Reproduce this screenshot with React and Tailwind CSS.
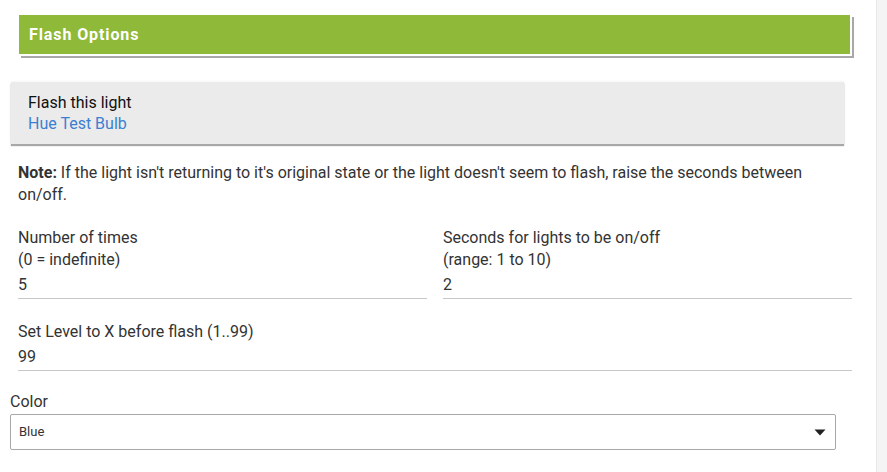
import React from "react";

export default function App() {
  return (
    <div className="flex w-[887px] h-[472px] bg-white overflow-hidden" style={{ fontFamily: "Roboto, 'Liberation Sans', sans-serif" }}>
      <div className="w-[876px] shrink-0 flex flex-col">
        <div className="pt-[15px] pl-[19px] pr-[24px]">
          <div className="h-[41px] bg-[#8fb939] border-r-2 border-b-2 border-white shadow-[2px_2px_0_#a8a8a8] flex items-center pl-[10px]">
            <span className="text-white font-bold text-[16px] tracking-[0.9px]">Flash Options</span>
          </div>
        </div>
        <div className="mt-[26px] ml-[11px] mr-[32px] bg-[#ebebeb] h-[62px] shadow-[0_2px_1px_#a8a8a8,0_0_3px_rgba(0,0,0,0.08)] pl-[17px] pt-[10px] text-[16px] leading-[21px]">
          <div className="text-[#111]">Flash this light</div>
          <div className="text-[#3c7fd1]">Hue Test Bulb</div>
        </div>
        <div className="mt-[18px] pl-[18px] pr-[24px] text-[16px] leading-[22px] text-[#333]">
          <span className="font-bold">Note:</span> If the light isn't returning to it's original state or the light doesn't seem to flash, raise the seconds between on/off.
        </div>
        <div className="mt-[21px] pl-[18px] pr-[24px] grid grid-cols-2 gap-x-[16px] text-[16px] text-[#333]">
          <div>
            <div className="leading-[22px]">Number of times</div>
            <div className="leading-[22px]">(0 = indefinite)</div>
            <div className="leading-[27px] border-b border-[#c8c8c8]">5</div>
          </div>
          <div>
            <div className="leading-[22px]">Seconds for lights to be on/off</div>
            <div className="leading-[22px]">(range: 1 to 10)</div>
            <div className="leading-[27px] border-b border-[#c8c8c8]">2</div>
          </div>
        </div>
        <div className="mt-[22px] pl-[18px] pr-[24px] text-[16px] text-[#333]">
          <div className="leading-[22px]">Set Level to X before flash (1..99)</div>
          <div className="leading-[27px] border-b border-[#c8c8c8]">99</div>
        </div>
        <div className="mt-[20px] pl-[10px] pr-[40px] text-[#333]">
          <div className="text-[16px] leading-[22px]">Color</div>
          <div className="mt-[1px] h-[36px] border border-[#a8a8a8] rounded-[2px] flex items-center justify-between pl-[8px] pr-[9px]">
            <span className="text-[13px]">Blue</span>
            <svg width="12" height="7" viewBox="0 0 12 7"><path d="M0.5 0.5 L11.5 0.5 L6 6.5 Z" fill="#222" /></svg>
          </div>
        </div>
      </div>
      <div className="flex-1 bg-[#f4f4f4] border-l border-[#e8e8e8]" />
    </div>
  );
}
